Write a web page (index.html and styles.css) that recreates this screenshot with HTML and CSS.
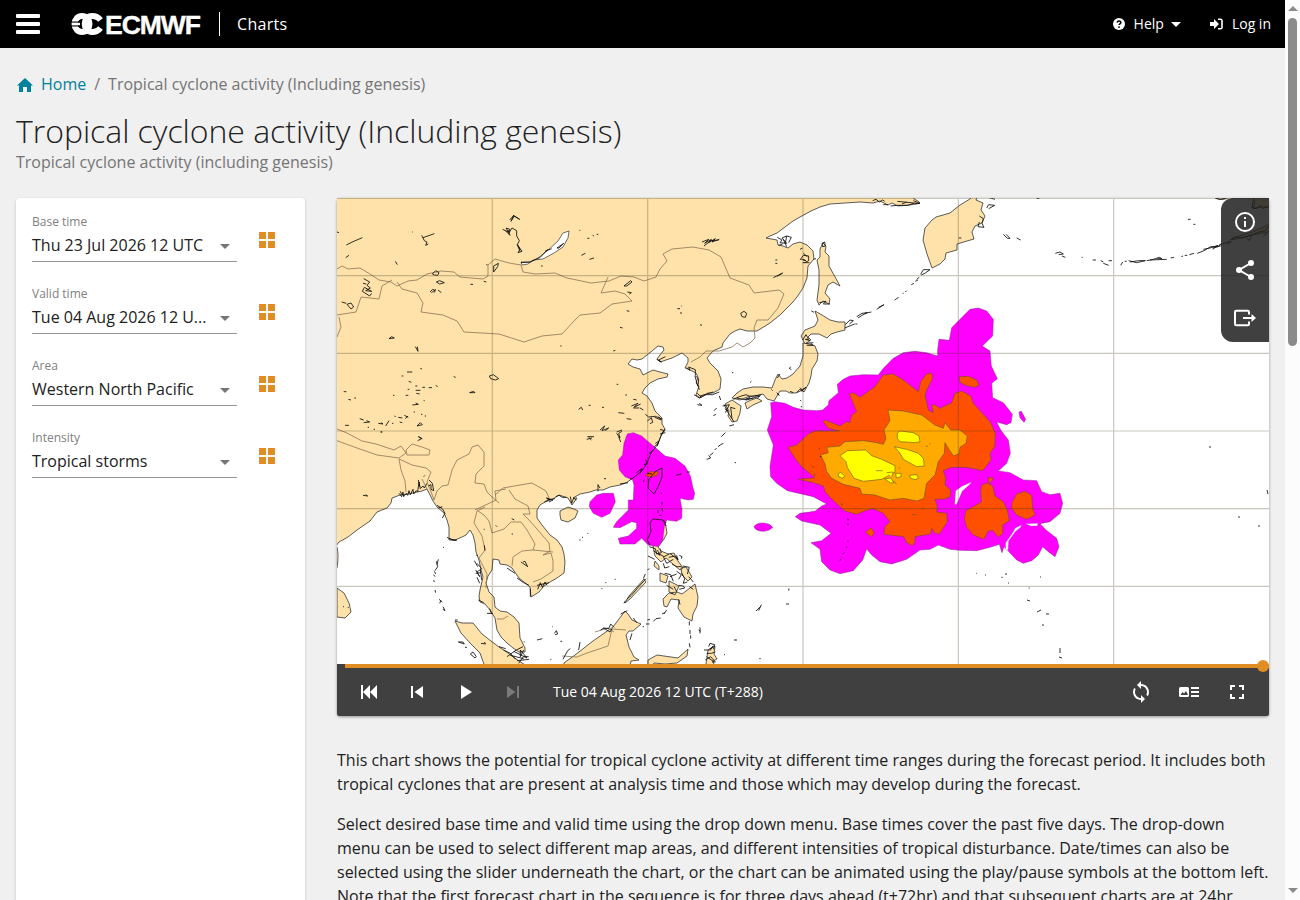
FILE: index.html
```html
<!DOCTYPE html>
<html lang="en">
<head>
    <meta charset="UTF-8">
    <meta name="viewport" content="width=device-width, initial-scale=1.0">
    <title>Tropical cyclone activity (Including genesis)</title>
    <link rel="stylesheet" href="styles.css">
</head>
<body>
<div class="window">
<div class="page">
    <header class="topbar">
        <button class="menu-btn" aria-label="Menu"><span></span><span></span><span></span></button>
        <svg class="logo" width="134" height="28" viewBox="0 -2 134 28">
            <g fill="none" stroke="#fff" stroke-width="6">
                <ellipse cx="11" cy="12" rx="7.500" ry="8"/>
                <path d="M29.500 8C27.500 5.300 24.500 4 21 4c-4.500 0-7.300 3.600-7.300 8s2.800 8 7.300 8c3.500 0 6.500-1.300 8.500-4"/>
            </g>
            <path d="M0 9.600h9v1.200H0zM0 13.200h9v1.200H0z"/>
            <path fill="#fff" d="M1 10.800h8v2.400H1z"/>
            <text class="logo-text" x="34" y="21.500" textLength="96">ECMWF</text>
        </svg>
        <span class="divider"></span>
        <span class="app-name">Charts</span>
        <nav class="user-nav">
            <a class="help">
                <svg width="12" height="12" viewBox="0 0 12 12"><circle cx="6" cy="6" r="6" fill="#fff"/><path d="M4.200 4.600c.1-2.300 3.800-2.200 3.600 0-.1 1.200-1.800 1.200-1.800 2.500" fill="none" stroke="#000" stroke-width="1.500"/><circle cx="6" cy="9.100" r=".95"/></svg>
                Help
                <svg class="caret" width="10" height="5" viewBox="0 0 10 5"><path d="M0 0h10L5 5z" fill="#fff"/></svg>
            </a>
            <a class="login">
                <svg width="13" height="12" viewBox="0 0 13 12"><path d="M0 4h4V1l5 5-5 5V8H0z" fill="#fff"/><path d="M8 1.200h2.500q1.500 0 1.500 1.500v6.600q0 1.500-1.500 1.500H8" fill="none" stroke="#fff" stroke-width="1.600"/></svg>
                Log in
            </a>
        </nav>
    </header>

    <nav class="breadcrumb">
        <svg width="16" height="14" viewBox="0 0 16 14"><path d="M8 0l8 7.500h-2V14h-4V9H6v5H2V7.500H0z" fill="#00819c"/></svg>
        <a>Home</a>
        <span class="slash">/</span>
        <span>Tropical cyclone activity (Including genesis)</span>
    </nav>
    <h1>Tropical cyclone activity (Including genesis)</h1>
    <p class="subtitle">Tropical cyclone activity (including genesis)</p>

    <main class="content">
        <aside class="filters">
            <div class="filter">
                <div class="select"><label>Base time</label><div class="value"><span>Thu 23 Jul 2026 12 UTC</span><i></i></div></div>
                <div class="tiles"><b></b><b></b><b></b><b></b></div>
            </div>
            <div class="filter">
                <div class="select"><label>Valid time</label><div class="value"><span>Tue 04 Aug 2026 12 U...</span><i></i></div></div>
                <div class="tiles"><b></b><b></b><b></b><b></b></div>
            </div>
            <div class="filter">
                <div class="select"><label>Area</label><div class="value"><span>Western North Pacific</span><i></i></div></div>
                <div class="tiles"><b></b><b></b><b></b><b></b></div>
            </div>
            <div class="filter">
                <div class="select"><label>Intensity</label><div class="value"><span>Tropical storms</span><i></i></div></div>
                <div class="tiles"><b></b><b></b><b></b><b></b></div>
            </div>
        </aside>

        <section class="chart-column">
            <div class="viewer">
                <svg class="map" width="932" height="466" viewBox="337 198 932 466">
                    <!-- land -->
                    <g class="land">
                        <path d="M330 190H913L914 199 918 201 920 203 910 205 898 206 892 203 888 205 880 201 873 203 860 202 845 203 830 204 820 207 811 211 800 217 793 221 777 233 770 236 766 238 777 240 778 245 783 246 788 248 793 244 800 242 807 245 813 251 814 259 808 266 807 278 803 288 797 297 792 303 780 315 770 323 757 331 747 331 740 329 735 331 730 334 723 343 722 347 713 351 707 358 710 363 718 371 721 379 720 389 713 393 708 393 700 398 696 395 699 386 696 383 698 377 696 373 690 370 685 368 688 362 688 358 682 353 672 358 660 362 657 359 660 355 664 350 663 347 658 346 652 351 642 359 637 360 632 359 628 364 633 367 640 369 643 375 653 370 660 372 668 374 667 377 658 379 650 383 645 388 642 393 647 396 652 403 655 411 662 418 662 424 665 429 662 433 660 438 658 443 654 447 651 453 648 455 646 462 643 467 640 474 633 478 626 483 620 485 610 487 603 490 596 490 590 492 580 494 573 498 577 498 572 505 568 498 559 495 553 499 545 502 540 505 537 510 537 518 542 525 550 535 557 540 562 547 564 554 565 562 564 573 557 578 550 582 544 586 539 592 531 597 530 587 524 582 519 578 512 568 507 565 500 564 499 560 493 559 492 570 488 576 486 583 489 592 494 597 495 607 500 611 507 612 514 617 519 623 520 638 525 648 525 652 519 652 513 648 507 643 501 637 497 630 495 618 490 610 485 604 480 602 479 596 480 590 483 577 481 570 479 560 476 552 475 543 473 535 470 530 466 535 462 537 455 540 449 540 449 527 447 520 444 513 437 507 433 501 430 495 427 489 422 491 417 492 409 494 400 495 392 498 391 503 387 508 377 512 370 521 357 530 348 537 339 542 336 546 330 550z"/>
                        <path d="M337 547q2 8 0 21 M337 588l7 5 5 10 2 9-6 6-8-1z"/>
                        <path d="M977 190l-7 9-10 6-10 8-14 4-4 3-7 8-2 12 4 14 5 14 8-4 5-5 1-6 11-3 0-6 10-3 7-2-2-7 3-6 7-3 3-7-4-6 2-7-7-3 2-5 6-5 6-9z"/>
                        <path d="M820 249l3-6 3 3-1 6 4 4 0 10 5 9 6 11-7-4-5 3-3 8 5 6-1 5-6-3-4 4-2-5 2-15 0-15-2-10 3-3z"/>
                        <path d="M815 311l7 4 8 5 8 2 7 0 0 8-8 2-6 2-4 4-8-4-8 0-3 3 3 3-6 4-4-8 4-6 10-4 3-6z"/>
                        <path d="M803 343L809 344 815 346 818 354 817 361 812 369 811 376 809 383 804 392 800 389 796 393 790 393 786 391 780 391 777 396 774 401 767 399 763 394 756 396 750 396 740 400 732 398 737 393 743 389 753 387 763 387 772 388 775 380 778 374 782 379 787 378 793 374 800 366 803 356z"/>
                        <path d="M725 404L732 400 741 406 740 413 737 421 732 422 728 416 729 411zM745 403L751 400 757 398 762 401 753 405 747 409z"/>
                        <path d="M560 511l8-4 6 2 4 2-3 7-7 4-7-2-1-5z"/>
                        <path d="M455 621l7 2 11 0 9 11 9 7 8 6 9 6 8 6 12 8h-43l-5-14-10-10-9-10z"/>
                        <path d="M562 680l2-17 11-8 18-14 20-14 12-16 3 3 4 6 9 4-8 7-4 0-3 4 3 12 5 10 5 3-8 1-2 10-4 6z"/>
                        <path d="M648 668l0-8 9-5 21 3 10-9-1 7-10 7-12 1-11-1-2 5zM706 664l2-14 7-4-1 8 3 5-4 2 2 8h-9z"/>
                        <path d="M653 519l12 2 2 12-3 6-6 8 3 4 7 3 6-1 4 8 5 7-3 2-6-5-8-7-5 4-6-6-2-10-2-8 2-8zM655 561l4 5 0 4-5-4zM660 573l8 3-2 7-6-2zM669 581l10 5-4 9-6-3zM681 568l5-1 6 10-4 4-6-6zM695 584l3 13-1 9-4 8-1 7-8-4-6-9 1-8-8-1-4 8-3-1-1-7 6-6 8-1 5 2 8-6zM644 579l2 3-16 17-5 4 4-7z"/>
                        <path d="M1214 197q8 5 16 0M1253 197h20v11l-10-1-10 1 2-6zM1232 238l20-6 12-5 8-5v9l-20 4-20 5z"/>
                    </g>

                    <!-- Lake Baikal -->
                    <path class="lake" d="M521 262l9 0 8-4 9-7 11-10 5-8 6-2-1 7-5 9-9 6-11 6-10 1-5 4-6 1z"/>

                    <!-- country borders -->
                    <g class="border">
                        <path d="M337 269l5-3 6 3 12-1 10 6 9 6 12 2 6 4 11-5 9-1 10-6 14-3 13 1 6 5 23 2 5-3 0-11 7-6 14 4 12 2 2 7 12 2 20-1 12 5 24 5 18-2 12-5 13 1 10 4 12-4 4-8 7-8-4-7 9-5 21-2 16 3 12 7 9 21 19 7 5 8 25-3 5 4-6 14-10 12-11 0-3 8 1 10-5 5-7 4-6-4-5 4-13 4-13 0-6 6-9 5"/>
                        <path d="M397 282l5 7 15 4 6 10-2 9 22 3 14 6 7 11 35 2 25 8 18-6 20-2 12-13 6-6 20-2 12-9 20-3-7-7-10-3-14 2 7-16"/>
                        <path d="M337 315l19-3 5-15 18 2 3-13 10-6M337 337l4-10-2-10M337 429l10 4 15 8 14 3 18 6 7-4 5 7-7 5-22-3-20-7-22-8M406 450l6-6 10 3 8 3-1 5-22 0z"/>
                        <path d="M399 459l13 6 14 3 5 4-4 10 3 7 4 11 3-9 5-5 6-1 4-15 5-10 12-6 3-7 6-2 6 7 0 14-8 8-1 9 9 1 3 8 4 4 8 7M406 492l-1-11-4-11-2-11M427 489l-5-10M495 495l8-7 17-3 12-2 14 8 3 7"/>
                        <path d="M509 490l6 9 13 7 2 8-7 0 6 6 8 9 12 14 1 8-7 4 8-2 2 8 0 10-12 8-8 3M533 550l2-6-8-14-6-8-10 0-7 7-12 4-3-12-5-6-6-4M533 550l20 2M512 566l1-9 9-6 11-1M485 507l-8 4-3 12 8 13 3 14-6 8 8 16-1 14M475 510l21-10-1-9 11-2M497 619l6 0 5-3"/>
                        <path d="M562 656l15 1 10-4 21-7 4-17 14 1M595 632l13-4 6 4M796 413l5 1"/>
                    </g>

                    <!-- probability contours, western group -->
                    <g transform="translate(570 430) scale(.33333)">
                        <g class="p10">
                            <path d="M172 12L190 8 215 18 240 40 255 52 285 78 315 85 345 108 362 140 368 170 374 190 370 208 355 210 330 205 336 240 335 265 320 274 290 270 283 290 278 330 265 350 235 345 215 325 195 342 150 342 145 325 175 318 200 295 200 278 185 275 150 293 130 292 140 275 175 240 175 210 190 210 192 165 188 150 165 140 148 120 145 90 158 75 162 40z"/>
                            <path d="M60 215L80 195 100 190 130 190 136 215 120 250 95 262 70 250 58 230zM552 290Q560 278 580 279 600 280 608 292 600 303 580 304 556 303 552 290z"/>
                        </g>
                        <g class="p30">
                            <path d="M225 135L240 125 265 125 262 136 240 142z"/>
                        </g>
                    </g>

                    <!-- probability contours, eastern group -->
                    <g transform="translate(760 350) scale(.33333)">
                        <g class="p10">
                            <path d="M32 158L45 155 75 160 100 172 130 180 170 182 188 180 205 165 207 152 235 128 232 103 250 88 270 78 310 74 355 75 370 55 400 25 430 8 465 4 500 8 533 18 533 0 537 -32 568 -29 575 -67 595 -87 630 -122 655 -126 680 -117 700 -92 698 -42 667 -12 690 3 694 48 712 86 695 100 698 143 730 158 757 193 753 218 740 224 710 216 722 240 745 270 751 310 740 340 715 363 750 368 790 390 830 392 845 425 870 434 900 430 908 460 900 490 870 515 840 521 858 540 890 565 897 590 885 620 865 605 848 590 835 615 815 632 790 640 770 630 740 598 732 590 726 608 718 583 690 592 650 602 600 601 570 598 535 585 510 598 480 600 440 628 395 642 360 635 335 615 320 597 308 630 280 662 240 671 210 660 185 635 180 598 153 578 185 572 213 550 180 525 125 513 106 500 120 490 165 484 185 468 200 462 160 440 82 422 50 400 32 380 30 350 40 285 22 240 35 200z"/>
                            <path d="M777 186L784 184 797 208 792 217 780 203z"/>
                        </g>
                        <path class="gap" d="M587 422l20-14 28-12-8 10-20 17-17 40-6 0zM758 548l8-14 18-9-1 6-17 14-20 27-2 30-7-4 0-20zM797 521l37-1-2 8-20 0z"/>
                        <g class="p30">
                            <path d="M84 292L110 285 145 252 165 243 238 243 205 235 190 215 195 210 240 228 260 215 270 218 275 195 290 185 268 132 280 128 300 142 345 110 370 75 400 72 430 90 475 125 482 95 500 72 515 70 518 85 500 120 495 135 505 180 520 188 515 165 525 165 540 175 575 158 585 130 605 123 632 138 640 160 690 215 706 250 704 290 690 310 693 330 668 362 620 352 575 352 550 362 557 385 555 405 572 420 570 440 555 447 525 448 532 470 530 486 560 490 562 515 538 552 525 550 515 535 512 552 465 560 465 575 457 587 440 578 432 560 372 553 375 530 390 515 370 490 340 476 315 482 290 493 255 483 215 447 195 425 190 408 160 398 115 388 165 383 125 350 105 325z"/>
                            <path d="M598 80L625 79 650 90 657 105 645 112 620 107 600 97zM317 547L333 533 343 548 334 561zM684 382L701 385 688 402z"/>
                            <path d="M665 405L682 399 698 408 705 438 730 455 742 480 748 512 728 525 728 550 715 561 697 540 683 545 672 568 640 555 620 532 613 505 618 482 640 470 665 455 662 425zM756 458L770 432 795 424 815 436 818 475 825 495 800 508 770 495 755 475z"/>
                        </g>
                        <g class="p50">
                            <path d="M384 180L430 183 485 195 525 225 550 235 555 218 572 240 600 240 622 258 618 280 600 292 597 312 580 317 568 300 555 278 553 310 535 335 525 375 500 400 492 445 470 453 430 445 390 450 345 435 305 432 300 415 250 403 215 385 200 365 195 342 182 315 205 308 200 292 240 288 255 275 310 272 350 278 370 283 378 265 372 240 390 212z"/>
                        </g>
                        <g class="p70">
                            <path d="M240 317L262 302 317 300 335 317 365 328 405 347 405 367 365 388 310 394 282 385 262 352 258 335zM412 250L420 243 460 248 477 258 480 275 465 278 420 275 412 265zM403 290L440 298 475 310 490 325 493 348 470 350 430 328 418 307zM234 372l8-5 12 11-5 7-12-4zM449 376l22-2 4 11-10 4-14-5zM374 387l18-3 10 14-10 1zM407 370l16 0 0 10-14 4z"/>
                            <path d="M348 362h20M380 368l20-2-5 15M398 392l12 10M416 353l5 3M498 290l6-2M508 282l4-2M455 494h14M485 475h10"/>
                        </g>
                    </g>

                    <!-- coastlines drawn over the shading -->
                    <g class="coast">
                        <path d="M665 429l-4 7-3 8-7 9-4 10-5 8-9 7M662 468l-6 3-7 8-1 9 6 6 4-7 4-10zM650 545l-3-5 4-8-1-9 3-4 10 1 3 6"/>
                    </g>
                    <g class="rough" transform="translate(337 196) scale(.33333)">
                        <path d="M497 100l18 8-8-12 12 4-4 12 10-16 14 8 0 16 8 14-6 12 8 14-6 10 12-4-14-20 8 20M505 104l14 14-6-16M518 72l12-14-8 18 10-16 16 10-20-12M258 125l34-12M254 118l8 16 8 4-4 10 8-4M28 147l20-10 28-12M26 185l10-7M0 108l6 2M80 248l18 10-8 10 10 8-14 8 18 2-22-12-6 12 22 14 6-8M78 262l10 2M175 196l6 10M225 108h2"/>
                        <path d="M14 318l14 4 M30 325l12-4 8 12-8 6zM286 234l10-10 10 6-4 8-10-1zM298 258l10 6 14-4-14-6zM279 288l8-8 8 4-4 6M283 290l14-10M303 282l10 8M470 210l14-8-2 10-12 16zM400 265h8M440 256l8 2M448 205l4 2M156 428l16-2-8-4zM235 452l8 14-2-14M670 450h4M457 540l12-4 16 12-10 4-14-4zM398 590l16 0-4-4z"/>
                        <path d="M210 528l16 0M194 540h5M250 517l5 2M215 556l8 3M235 570h6M256 574h8M275 575h10M296 568l6 4M236 583l14 0M212 580h5M238 592l10 2M206 598h8M168 598h4M226 627l18-2-8-4M260 614h3M20 587h8M34 610l8 2M52 606h5M68 668l12 4M80 680l18-2-10-4M124 682l14 2-6-4M146 690l10-16M165 682h4M172 660l4 2M184 664l12 2M188 678l8 2M202 658l12 6M205 668l8-8M240 690l16-4-6-6zM92 694h4M110 700h4M130 708h6M24 688l12 0M252 655h4M265 658v4M230 648h4M350 542l6 2"/>
                        <path d="M552 200l28-2 30-14 22-24M624 166l20-8M660 156l20-14-14 14zM612 210h5"/>
                    </g>
                    <g class="rough" transform="translate(570 196) scale(.33333)">
                        <path d="M396 138l20-8-12 12 20-12-8 10 20-12-10 10 22-8M402 150l20-16 24-2M28 103h3M52 127h6M68 118l4 2M80 115h5M34 178l12-6M58 190l14-4M162 270l20-16 4 4-16 12zM172 288l12 2-6 4M170 344l8 2M150 394l8 2M390 386l6 2M322 338h8M334 330h2M330 350l6 2M130 465l6-2M610 245l28-14-16 10M616 192h6M616 202h6M512 352l10-6 8 6-4 12-10-2z"/>
                        <path d="M622 124l14 8-6 8 20 2-14-16 14-6 14 4-8 16M640 130l10 22M650 120l-4 22M626 148l12-4M690 160l8-4M694 190l14 4-10-4M698 200l20 0M260 490l14 8-8-6 20-10M350 515l10 8-4-10 20 8 0 18 10 10-2 20 4 12M375 540l8 30M372 596l16 10 20-10 20 0 20-8M382 592l12 12M390 600l40-12M382 626l14 2-8-6M448 600l4 12"/>
                        <path d="M462 626l12 20-8-8 20 30-4-34 14 4M458 630l20-4-12 24M486 668l6 10M478 690l14-4M490 610l18-8 20-6 14 6 20-4M500 606l30 6 40-12M540 604l-14 6 24-4M440 636l-8 8M438 655l-8 4M556 600l16-4-10 12M658 516l6 6M540 560l4-4M486 530h4M630 534l-8 12M604 580l4 4M620 590l8 8M660 586l10 4M680 590l20-10"/>
                        <path d="M184 630l20-8-12 12 20-10M190 636l18 0M210 636l10 6M26 640l8-6 4 8M56 628h6M96 634h6M140 565h5M166 597h5M190 610l10 2M145 650l18 2M170 668l14 2M226 655l10 8 20-2 20 8M232 675l12-10 4 14-8 4M254 664l20 8-8-10M90 702l14-12-8 14 20-8-10 8M140 708l16-6M270 700l14 4-8 8"/>
                    </g>
                    <g class="rough" transform="translate(800 196) scale(.33333)">
                        <path d="M218 14l10-4 10 8 10-6 6 4M250 26h14M272 30l20-2 30 0 20-6M292 16l60 6M306 24l14-6M340 14l20 8-16 2M66 142l8-4 2 12-8 2zM40 190l8-2M0 192l10-14 16 2 0 14-12 6M10 172l12 10M538 60l12 8-4 14 6 12-18-2 4-14M560 36l6-10 18 2-18 10M565 4l20 6M610 115l12 12 8 0-12-12M650 126l12 6M476 126h8"/>
                        <path d="M362 235l8-14 20 0-14 10-12 6M350 250l8-6M334 266l8-4M346 256l8-4M316 288l4-4M308 292h3M284 312l12-8M230 340l22-14-16 8M194 352l20-4M170 362l16-10 16-2-16 8-12 8M136 386l14-14 10 2-12 10M134 396l30-12M166 384h6M58 320l20-4-8 8 20 0M8 432l10-16 8 14-10 0 14 4M18 442l22-2M20 448l20 0-8-6M8 580l10-6-14 12M0 575l10 12M34 345l8 4"/>
                    </g>
                    <g class="rough" transform="translate(1030 0) scale(.33333)">
                        <path d="M76 760l14-4 10 6-14 2M96 768l10 4M155 772h3M188 780l10 0M212 782l8 4M220 790l16 6M236 782l10 0M272 796l6-10M284 784h6M296 782l24 6 26-6-20 0-26 4M350 782l20-4 18-6 8 4-14 0M360 780l50-2M422 774l10-2M454 770l5-2M464 766h8M478 764l14-4M502 760l20-8 20-12 20 0 14-8M520 748l20-4 24-8-16 12M548 744l24-6M568 734l36-10-12 8M600 720l18-8 20 2 30-10 20-8 18-4 10-14M650 714l8 8 6-14M700 708l14-10M474 658h8M490 673h6M20 595h8M556 595l14 3 16-3M670 600l-4 24 14 2 12-10 6 10 16-8"/>
                    </g>
                    <g class="rough" transform="translate(337 430) scale(.33333)">
                        <path d="M242 32l12-6-10-6 12 6M78 196l14 2-6-4M132 6h3M186 190l8 10 4-14 2 14 8-10 4 6 4-14 4 12 8-16 2 14 8-10 4 4 4-30 4 20 8-8 4 6 8-14M190 184l4 10M244 150l4 20M300 226l16 10 8 14-8 14M304 234l12-4M330 322l16 8 14 0M338 326l20 6M276 150l10 10 4 22-8-4 0-14-8 4M260 140l4-4"/>
                        <path d="M304 388l-4 16M298 394l4 16-8 12M292 424l4 8M290 434l4 6M288 452l6 2M318 352h3M296 488l-2-8M306 508l10 8M312 512l-4 8M318 530l6 12-6-4M412 392l10 18M420 400l14 16-14 10 8 14-12-20M416 430l16-2M420 442l8 18M418 376h4M430 420l4 30M424 510l16 8M450 550l18 0M458 536l6 16M354 570l8 0M364 636l18 6-4-6zM400 672l8-6 10 14-4 4zM432 640l14 2-4-6M384 652h6"/>
                        <path d="M486 650l20 6M500 660l20 10 16 18M510 680l28-20 20-10M520 676l40 10M530 664l40 20-20-24 0 20 10-20M545 700l14-20 16 0M540 692l36-4M622 216l16-8-10-4 20 6-12 6M630 210l24-4M656 200l10-4 10 6 12 0M700 200l4 20 6-16 8 6M652 610l6-8 4 10-8 2M600 630l16-4M560 636h3M670 634h5M646 590h2M640 688h3M678 688l14 -26 8-6M524 266l8 4M476 286l4 4M524 312h4M440 298h3M442 346l2 16M552 396l20 14-8-16-6 2M510 414l24 16M540 444l20 14 16 8M602 478l8-20 6 14 8-16 6 10M600 466l36-8M580 476l0 24M18 530h3M32 532h3"/>
                    </g>
                    <g class="rough" transform="translate(570 430) scale(.33333)">
                        <path d="M50 28l16-4M56 22l8 8M52 20l20 0M140 10l10 14-4-14 10-6M146 20l6 16M84 184l0-20 6 10M102 146l6 0M150 162l24-4M180 148l10-4M200 128l16-12-6 14M222 104l10-4-6-12M238 70l12-10M256 40l10-6-4 14M270 12l16-4M410 88l12-4-6-8M420 76l10-8M434 60l6-6M444 50l8-6 8-4M454 20l12-12M494 98h4M318 136l16-4M350 126h10M276 216v10M276 236l2 8M264 240v8M268 256h6M280 270l8 8M274 188v4M232 130l14 2M220 156l4-8"/>
                        <path d="M238 350l18 6 4 16 14-4-4-12M250 362l20 14-8-16M234 378l20 10M268 372l14 8 16-8M280 380l10 20 20-12M296 382l20-4 8 10M300 370l24 20-4-14M328 376l8 4-2 6M280 400l4 14 14-4M306 402l14 8 14 0M284 430l18 4 8 20M300 440l20-8M320 424l14 10-8 14M338 408l20 4-6 20M336 430l8 16-4 14 12-4M326 466l14 2 4 6-16 4M356 440l14 16M358 470l12 8M290 466l20 12M302 490l8 0M312 470l8 14M232 420l6-4M220 446l6-14M170 508l14-12 24-28 20-22M162 520l4-8M330 524l-4-16M290 540l-8 12"/>
                        <path d="M218 590h4M228 582l10 0M232 570l8-2M250 574l8-8 14-2M276 552l8-4M358 574l0 12M360 600v12M362 616v10M358 640l2 12M390 592v18M386 600l6 4M566 542l8-18M654 480h4M492 630h4M568 686h4M402 660h14l14-12-10 14M416 650l4-10 14 4-4 14M410 670l14 0 12-4M406 690l16-10 14 16-10 0M410 680l20 14M28 330h4M36 322h3M52 310h3M106 458h3M94 476h3M134 448h3M462 674h3M92 600l10-6 14 2 6-14 10 10M100 594l20 12 6-10M30 636l-4 24M152 552l20-10M190 564l10 14M186 610l-6 20"/>
                    </g>
                    <g class="rough" transform="translate(760 350) scale(.33333)">
                        <path d="M88 56l4-6M52 132l6 4M178 296v2M182 318v3M160 350v2M164 374v2M244 462l3 2M264 506v6M264 520v6M264 572v4M260 590v3M248 612l4-4M240 632l4-6M648 670h2M724 682h4M806 714h3M85 717h3M122 150v3M124 168v4"/>
                    </g>
                    <g class="specks">
                        <path d="M1209 447h2M1267 490l1 4M1238 517h2M1258 526h2M1005 574h2M1027 600l3 1M1037 612l4-2M1042 625h2M1046 614h3M1060 648v5M1059 657l3 1M756 611l4-4M786 604h3M735 640h2M1008 583h1M985 575h1M1040 577h1"/>
                    </g>

                    <!-- graticule -->
                    <path class="grid" d="M492.300 198V664M647.700 198V664M803 198V664M958.300 198V664M1113.700 198V664M337 198.300H1269M337 275.700H1269M337 353.300H1269M337 431H1269M337 508.700H1269M337 586.300H1269"/>
                </svg>

                <div class="side-tools">
                    <svg width="24" height="24" viewBox="0 0 24 24"><circle cx="12" cy="12" r="9" fill="none" stroke="#fff" stroke-width="2"/><path d="M11 7h2v2h-2zM11 11h2v6h-2z" fill="#fff"/></svg>
                    <svg width="24" height="24" viewBox="0 0 24 24"><path d="M18 5L6 12l12 7" fill="none" stroke="#fff" stroke-width="2"/><g fill="#fff"><circle cx="18" cy="5" r="3"/><circle cx="6" cy="12" r="3"/><circle cx="18" cy="19" r="3"/></g></svg>
                    <svg width="24" height="24" viewBox="0 0 24 24"><path d="M16 8.500V6q0-1.200-1.200-1.200H3.200Q2 4.800 2 6v12q0 1.200 1.200 1.200h11.600q1.200 0 1.200-1.200v-2.500M10 12h9" fill="none" stroke="#fff" stroke-width="2"/><path d="M18.500 8l4.500 4-4.500 4z" fill="#fff"/></svg>
                </div>

                <div class="slider"><span class="knob"></span></div>
                <div class="player">
                    <svg width="24" height="24" viewBox="0 0 24 24"><path d="M4 5h2v14H4zM13 5v14l-7-7zM20 5v14l-7-7z" fill="#fff"/></svg>
                    <svg width="24" height="24" viewBox="0 0 24 24"><path d="M6 6h2v12H6zM9.500 12l8.500 6V6z" fill="#fff"/></svg>
                    <svg width="24" height="24" viewBox="0 0 24 24"><path d="M8 5v14l11-7z" fill="#fff"/></svg>
                    <svg class="disabled" width="24" height="24" viewBox="0 0 24 24"><path d="M6 18l8.500-6L6 6zM16 6h2v12h-2z" fill="#fff"/></svg>
                    <span class="frame-time">Tue 04 Aug 2026 12 UTC (T+288)</span>
                    <svg width="24" height="24" viewBox="0 0 24 24"><path d="M12 4V1L8 5l4 4V6c3.310 0 6 2.690 6 6 0 1.010-.25 1.970-.7 2.800l1.460 1.460C19.540 15.030 20 13.570 20 12c0-4.420-3.580-8-8-8zm0 14c-3.310 0-6-2.690-6-6 0-1.010.25-1.970.7-2.800L5.240 7.740C4.460 8.970 4 10.430 4 12c0 4.420 3.580 8 8 8v3l4-4-4-4v3z" fill="#fff"/></svg>
                    <svg width="24" height="24" viewBox="0 0 24 24"><path d="M14 7h8v2h-8zM14 11h8v2h-8zM14 15h8v2h-8z" fill="#fff"/><rect x="2" y="7" width="10" height="10" rx="1.500" fill="#fff"/><path d="M3.500 15l2-3 1.500 1.500 2-2.500 2 4z" fill="#404040"/></svg>
                    <svg width="24" height="24" viewBox="0 0 24 24"><path d="M7 14H5v5h5v-2H7zM5 10h2V7h3V5H5zM17 17h-3v2h5v-5h-2zM14 5v2h3v3h2V5z" fill="#fff"/></svg>
                </div>
            </div>

            <div class="description">
                <p>This chart shows the potential for tropical cyclone activity at different time ranges during the forecast period. It includes both tropical cyclones that are present at analysis time and those which may develop during the forecast.</p>
                <p>Select desired base time and valid time using the drop down menu. Base times cover the past five days. The drop-down menu can be used to select different map areas, and different intensities of tropical disturbance. Date/times can also be selected using the slider underneath the chart, or the chart can be animated using the play/pause symbols at the bottom left. Note that the first forecast chart in the sequence is for three days ahead (t+72hr) and that subsequent charts are at 24hr</p>
            </div>
        </section>
    </main>
</div>
<div class="scrollbar">
    <span class="arrow up"></span>
    <span class="thumb"></span>
    <span class="arrow down"></span>
</div>
</div>
</body>
</html>
```
FILE: styles.css
```css
* {
    box-sizing: border-box;
}

body {
    margin: 0;
    font-family: "Open Sans", "Noto Sans", sans-serif;
    font-size: 16px;
    line-height: 24px;
    color: #212121;
    background-color: #f0f0f0;
}

.window {
    display: flex;
    height: 900px;
    overflow: hidden;
}

.page {
    width: 1285px;
    overflow: hidden;
}

/* top bar */
.topbar {
    display: flex;
    align-items: center;
    height: 48px;
    padding: 0 14px 0 16px;
    background-color: #000;
    color: #fff;
}

.menu-btn {
    display: flex;
    flex-direction: column;
    gap: 4px;
    width: 24px;
    padding: 0;
    border: 0;
    background: none;
}

.menu-btn span {
    height: 4px;
    border-radius: 1px;
    background-color: #fff;
}

.logo {
    margin-left: 31px;
    overflow: visible;
}

.logo-text {
    font-family: "Liberation Sans", Arial, sans-serif;
    font-weight: bold;
    font-size: 26.5px;
    fill: #fff;
    stroke: #fff;
    stroke-width: 0.4;
}

.divider {
    width: 1px;
    height: 24px;
    margin: 0 17px 0 14px;
    background-color: #fff;
}

.app-name {
    letter-spacing: 0.3px;
}

.user-nav {
    display: flex;
    gap: 29px;
    margin-left: auto;
    font-size: 14px;
}

.user-nav a {
    display: flex;
    align-items: center;
    gap: 9px;
}

.user-nav .caret {
    margin-left: -2px;
}

/* page heading */
.breadcrumb {
    display: flex;
    align-items: center;
    height: 24px;
    margin: 24px 0 0 17px;
    color: #757575;
}

.breadcrumb svg {
    margin-top: 2px;
}

.breadcrumb a {
    margin-left: 8px;
    color: #00819c;
}

.slash {
    margin: 0 8px;
}

h1 {
    margin: 15px 0 0 16px;
    font-size: 32px;
    font-weight: 300;
    line-height: 40px;
    letter-spacing: -0.04px;
}

.subtitle {
    margin: -1px 0 0 16px;
    color: #757575;
}

.content {
    display: flex;
    gap: 32px;
    padding: 24px 16px 0;
}

/* filters */
.filters {
    width: 289px;
    height: 800px;
    padding: 15px 16px;
    border-radius: 4px;
    background-color: #fff;
    box-shadow: 0 1px 3px rgba(0, 0, 0, 0.2);
}

.filter {
    display: flex;
    height: 72px;
}

.select {
    width: 205px;
    height: 49px;
    border-bottom: 1px solid #949494;
}

.select label {
    display: block;
    font-size: 12px;
    line-height: 17px;
    color: #808080;
}

.value {
    display: flex;
    align-items: center;
    height: 30px;
}

.value span {
    width: 176px;
    white-space: nowrap;
}

.value i {
    margin: 2px 0 0 12px;
    border: 5px solid transparent;
    border-top-color: #757575;
    border-bottom: 0;
}

.tiles {
    display: grid;
    grid-template-columns: 7px 7px;
    grid-auto-rows: 7px;
    gap: 2px;
    margin: 19px 0 0 22px;
}

.tiles b {
    background-color: #e08e24;
}

/* chart viewer */
.chart-column {
    width: 932px;
}

.viewer {
    position: relative;
    height: 518px;
    border-radius: 4px;
    box-shadow: 0 1px 3px rgba(0, 0, 0, 0.4);
}

.map {
    display: block;
    background-color: #fff;
}

.land path {
    fill: #fee2aa;
    stroke: #333;
    stroke-width: 0.8;
    stroke-linejoin: round;
}

.lake {
    fill: #fff;
    stroke: #333;
    stroke-width: 0.7;
}

.border path {
    fill: none;
    stroke: #8a7355;
    stroke-width: 0.8;
}

.coast path {
    fill: none;
    stroke: #222;
    stroke-width: 0.9;
}

.rough path {
    fill: none;
    stroke: #111;
    stroke-width: 2.6;
}

.specks path {
    stroke: #333;
    stroke-width: 1;
}

.p10 path {
    fill: #f0f;
    stroke: #8a2090;
    stroke-width: 1.5;
    stroke-linejoin: round;
}

.gap {
    fill: #fff;
    stroke: #a050c0;
    stroke-width: 1;
}

.p30 path,
.p50 path,
.p70 path {
    stroke: #6a5030;
    stroke-width: 1.8;
    stroke-linejoin: round;
}

.p30 path {
    fill: #fe5000;
}

.p50 path {
    fill: #ffaa00;
}

.p70 path {
    fill: #ff0;
}

.grid {
    fill: none;
    stroke: #3c3214;
    stroke-opacity: 0.28;
    stroke-width: 1.2;
}

.side-tools {
    position: absolute;
    top: 0;
    right: 0;
    display: flex;
    flex-direction: column;
    align-items: center;
    gap: 24px;
    width: 48px;
    height: 144px;
    padding-top: 12px;
    border-radius: 12px 0 0 12px;
    background-color: rgba(33, 33, 33, 0.86);
}

.slider {
    position: relative;
    height: 4px;
    background: linear-gradient(to right, #404040 8px, #e08e24 8px);
}

.knob {
    position: absolute;
    right: 0;
    top: -4px;
    width: 12px;
    height: 12px;
    border-radius: 50%;
    background-color: #e08e24;
}

.player {
    display: flex;
    align-items: center;
    gap: 24px;
    height: 48px;
    padding: 0 20px;
    border-radius: 0 0 2px 2px;
    background-color: #404040;
    color: #fff;
    font-size: 14px;
}

.player .disabled {
    opacity: 0.3;
}

.frame-time {
    flex: 1;
    margin-left: 4px;
}

.description {
    padding-top: 32px;
}

.description p {
    margin: 0 0 16px;
}

/* scrollbar */
.scrollbar {
    display: flex;
    flex-direction: column;
    align-items: center;
    width: 15px;
    height: 900px;
    padding: 6px 0 7px;
    background-color: #fcfcfc;
}

.arrow {
    border: 5px solid transparent;
}

.arrow.up {
    border-top: 0;
    border-bottom-color: #8b8b8b;
}

.arrow.down {
    margin-top: auto;
    border-bottom: 0;
    border-top-color: #8b8b8b;
}

.thumb {
    width: 9px;
    height: 328px;
    margin-top: 7px;
    border-radius: 5px;
    background-color: #8b8b8b;
}
```
